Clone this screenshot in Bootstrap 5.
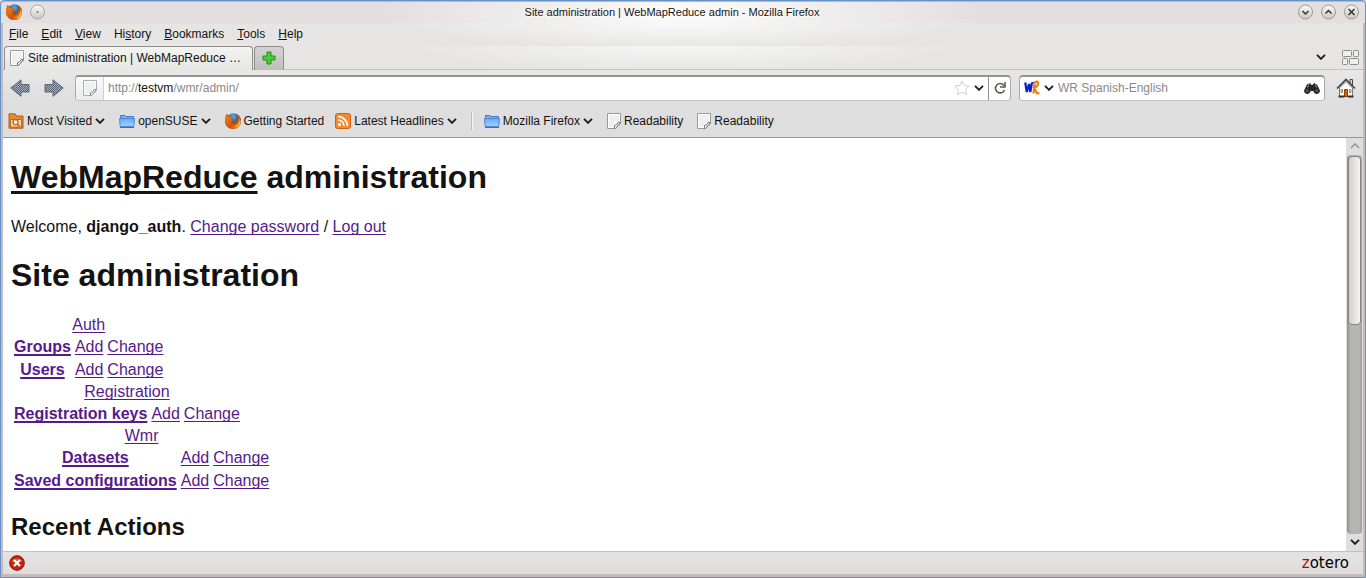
<!DOCTYPE html>
<html lang="en">
<head>
<meta charset="utf-8">
<meta name="viewport" content="width=device-width, initial-scale=1">
<title>Site administration | WebMapReduce admin</title>
<link href="https://cdn.jsdelivr.net/npm/bootstrap@5.3.0/dist/css/bootstrap.min.css" rel="stylesheet">
<style>
body { font: 12px/16px "Liberation Sans", Arial, sans-serif; color: #141312; background: #dedede; }
button { font: inherit; color: inherit; background: none; border: 0; padding: 0; line-height: 16px; }
svg { display: block; flex: none; }
.window-frame { border: 1px solid #6890c8; background: #c4bcba; padding: 0 2px 3px 2px; box-shadow: inset 0 1px #a9bedd; border-radius: 4px 4px 0 0; }
.title-row { height: 21px; font-size: 11px; margin: 1px -2px 0; padding: 0 6px 0 5px; border-radius: 3px 3px 0 0; background: radial-gradient(ellipse 300px 80px at 50% 50%, #fcfbfb, #e3dfde); }
.title-text { text-shadow: 0 1px #fff; }
.chrome-area { background: #e4e3e2; }
.menu-row { height: 23px; padding: 0 6px; background: radial-gradient(ellipse 280px 26px at 50% 0, #f9f9f9, #e6e5e4); }
.menu-row button { margin-right: 13px; }
.tab-row { height: 24px; border-bottom: 1px solid #c3c2c1; padding-left: 1px; background: radial-gradient(ellipse 280px 26px at 50% 0, #f6f6f6, #e6e5e4); }
.tab-page { width: 249px; height: 24px; padding: 0 6px 0 5px; border: 1px solid #8f8e8d; border-bottom: 0; border-radius: 4px 4px 0 0; background: linear-gradient(#f3f3f2, #e6e6e5); }
.tab-new { width: 30px; height: 24px; margin-left: 1px; border: 1px solid #8f8e8d; border-bottom: 0; border-radius: 4px 4px 0 0; background: linear-gradient(#d5d4d3, #bfbebd); }
.tool-area { background: linear-gradient(#e8e7e7, #dedede 50%); border-bottom: 1px solid #9b9a99; }
.nav-row { height: 36px; padding: 0 7px; }
.nav-forward { margin: 0 11px 0 14px; }
.nav-home { margin-left: 11px; }
.field-box { height: 26px; background: #fff; border: 1px solid #aaa; border-top: 2px solid #959493; border-bottom-color: #c4c4c4; border-radius: 4px; overflow: hidden; }
.field-box input { border: 0; outline: 0; padding: 0; background: none; color: #8a8988; min-width: 0; }
.field-box input::placeholder { color: #8a8988; opacity: 1; }
.url-text { cursor: text; color: #8a8988; }
.url-text b { font-weight: 400; color: #141312; }
.site-id { width: 28px; background: linear-gradient(#fafafa, #ececec); border-right: 1px solid #d0cfce; }
.reload-cell { width: 22px; border-left: 1px solid #8e8d8c; }
.search-col { width: 306px; }
.mark-row { height: 31px; padding: 0 5px; }
.mark-row button { gap: 3px; white-space: nowrap; }
.mark-row > * { margin-left: 14px; }
.mark-row > :first-child { margin-left: 0; }
.mark-row > .mark-near { margin-left: 11px; }
.mark-sep { width: 2px; height: 18px; background: linear-gradient(90deg, #bdbdbd 50%, #f6f6f6 50%); }
.page-view { background: #fff; min-height: 0; font-size: 16px; line-height: 19px; }
.doc { overflow: hidden; padding: 0 8px; min-width: 0; }
.doc h1 { font-size: 32px; line-height: 37px; font-weight: 700; margin: 21px 0; }
.doc h2 { font-size: 24px; line-height: 28px; font-weight: 700; margin: 20px 0; }
.doc p { margin: 0; }
.doc a { color: #551a8b; text-underline-offset: 2px; text-decoration-thickness: 1px; text-decoration-skip-ink: none; }
.doc h1 a { color: inherit; text-decoration-thickness: 3px; text-underline-offset: 3px; }
.doc th a { text-decoration-thickness: 2px; }
.admin-list { border-collapse: separate; border-spacing: 2px; }
.admin-list caption { caption-side: top; padding: 0; text-align: center; color: inherit; }
.admin-list td, .admin-list th { padding: 1px; text-align: center; }
.scroll-col { width: 17px; background: #dedede; }
.scroll-end { height: 17px; }
.scroll-track { background: linear-gradient(90deg, #8f8e8d, #b5b4b2 25%, #b5b4b2 80%, #a09f9e); border-radius: 4px; margin: 0 1px; padding: 1px; }
.scroll-thumb { height: 45%; border: 1px solid #868584; border-radius: 4px; background: linear-gradient(90deg, #d2d1cf, #e9e8e6 70%, #f5f5f5); }
.status-row { height: 24px; padding: 0 14px 0 6px; border-top: 1px solid #c3c2c1; background: linear-gradient(#e4e3e2, #dfdedd); }
.zotero-btn { font-family: "DejaVu Sans", sans-serif; font-size: 15px; color: #000; }
.zotero-btn span { color: #a00d0d; }
</style>
</head>
<body>
<svg width="0" height="0" class="position-absolute" aria-hidden="true">
  <defs>
    <linearGradient id="gKnob" x1="0" y1="0" x2="0" y2="1"><stop offset="0" stop-color="#fafafa"/><stop offset="1" stop-color="#c9c5c4"/></linearGradient>
    <linearGradient id="gFold" x1="0" y1="0" x2="0" y2="1"><stop offset="0" stop-color="#6ba8f0"/><stop offset="1" stop-color="#a8d0fb"/></linearGradient>
    <radialGradient id="gGlobe" cx=".45" cy=".25" r=".7"><stop offset="0" stop-color="#59b3e8"/><stop offset="1" stop-color="#0a2a70"/></radialGradient>
    <linearGradient id="gFox" x1="0" y1="0" x2="1" y2="1"><stop offset="0" stop-color="#f58a1c"/><stop offset=".6" stop-color="#d84f08"/><stop offset="1" stop-color="#f7b52a"/></linearGradient>
    <pattern id="pDots" width="2" height="2" patternUnits="userSpaceOnUse"><rect width="2" height="2" fill="#a9b3c2"/><rect width="1" height="1" fill="#56616f"/><rect x="1" y="1" width="1" height="1" fill="#56616f"/></pattern>
    <symbol id="iFox" viewBox="0 0 16 16"><circle cx="8.400" cy="7.400" r="7.200" fill="url(#gGlobe)"/><path d="M.8 3.800 1.800 1 3.500 3.600C5 3 6.800 3.300 7.800 4.600 7 5 6.600 5.700 7.200 6.400L9 6.800C8.800 8 7 8 6.800 8.800 7.200 10.300 9 10.600 10.600 9.700 12.400 8.700 12.700 6.800 11.900 4.900 12.700 5.200 13 5.800 13.200 6.200 13.300 4.200 12.400 2.800 11.400 1.800 14 2.700 15.900 5.200 15.800 8.300 15.600 12.600 12.300 15.900 8.100 15.900 3.800 15.900.4 12.700.2 8.500.1 6.400.4 5 .8 3.800Z" fill="url(#gFox)" stroke="#a63c05" stroke-width=".5"/><path d="M14.200 5C15.300 8.500 13.500 13 9.500 14 13 14.800 15.900 11.500 15.500 7.400Z" fill="#fbc83a"/></symbol>
    <symbol id="iPage" viewBox="0 0 14 16"><path d="M.5.5h13v10l-5 5h-8z" fill="#fdfdfd" stroke="#9a9a9a"/><path d="M2 2h10v7H8v5H2z" fill="#eeefef"/><path d="M13.500 9.500h-2.500l-1 2-2.500 1v3h1z" fill="#fff" stroke="#777"/></symbol>
    <symbol id="iDown" viewBox="0 0 10 6"><path d="m1 .8 4 4 4-4" fill="none" stroke="#1d1c1b" stroke-width="1.900"/></symbol>
    <symbol id="iFolder" viewBox="0 0 16 14"><path d="M1.500 6V1.500H6l1 1h7.500V6z" fill="#78aef0" stroke="#4079c4"/><path d="M.5 4.500h15l-.7 8H1.200z" fill="url(#gFold)" stroke="#4a8add"/><path d="M1 13.500h14" stroke="#5e6b78"/></symbol>
    <symbol id="iArrow" viewBox="0 0 20 18"><path d="M.8 9 11 .8V5.500h8v7.500h-8v4.300z" fill="url(#pDots)" stroke="#5c6877"/></symbol>
  </defs>
</svg>

<div class="window-frame vh-100 d-flex flex-column">
  <header class="title-row d-flex align-items-center gap-2">
    <svg width="16" height="16"><use href="#iFox"/></svg>
    <button aria-label="Pin window"><svg width="16" height="16"><circle cx="7.500" cy="8" r="7" fill="url(#gKnob)" stroke="#a9a5a4"/><circle cx="7.500" cy="8" r="1" fill="#777"/></svg></button>
    <div class="title-text flex-grow-1 text-center">Site administration | WebMapReduce admin - Mozilla Firefox</div>
    <div class="d-flex gap-2">
      <button aria-label="Minimize"><svg width="15" height="16"><circle cx="7.500" cy="8" r="7" fill="url(#gKnob)" stroke="#9c9897"/><path d="m4.500 7 3 3 3-3" fill="none" stroke="#333" stroke-width="1.500"/></svg></button>
      <button aria-label="Maximize"><svg width="15" height="16"><circle cx="7.500" cy="8" r="7" fill="url(#gKnob)" stroke="#9c9897"/><path d="m4.500 9.500 3-3 3 3" fill="none" stroke="#333" stroke-width="1.500"/></svg></button>
      <button aria-label="Close"><svg width="15" height="16"><circle cx="7.500" cy="8" r="7" fill="url(#gKnob)" stroke="#9c9897"/><path d="m4.500 5 6 6m0-6-6 6" stroke="#333" stroke-width="1.500"/></svg></button>
    </div>
  </header>

  <div class="chrome-area">
    <nav class="menu-row d-flex align-items-center" aria-label="Menu">
      <button><u>F</u>ile</button><button><u>E</u>dit</button><button><u>V</u>iew</button><button>Hi<u>s</u>tory</button><button><u>B</u>ookmarks</button><button><u>T</u>ools</button><button><u>H</u>elp</button>
    </nav>
    <div class="tab-row d-flex">
      <button class="tab-page d-flex align-items-center gap-1"><svg width="14" height="16"><use href="#iPage"/></svg><span class="text-nowrap">Site administration | WebMapReduce …</span></button>
      <button class="tab-new d-flex align-items-center justify-content-center" aria-label="New tab"><svg width="14" height="14"><path d="M5 1h4v4h4v4H9v4H5V9H1V5h4z" fill="#4ccb34" stroke="#1e8f14" stroke-linejoin="round"/></svg></button>
      <div class="ms-auto d-flex align-items-center gap-3 pe-1">
        <button aria-label="List all tabs"><svg width="10" height="6"><use href="#iDown"/></svg></button>
        <button aria-label="Tab groups"><svg width="17" height="17" fill="#efefef" stroke="#8b8d88"><rect x=".5" y="1.500" width="9" height="6" rx="1"/><rect x="11.500" y="1.500" width="5" height="6" rx="1"/><rect x=".5" y="9.500" width="5" height="6" rx="1"/><rect x="7.500" y="9.500" width="9" height="6" rx="1"/></svg></button>
      </div>
    </div>
  </div>

  <div class="tool-area">
    <div class="nav-row d-flex align-items-center">
      <button aria-label="Back"><svg width="20" height="18"><use href="#iArrow"/></svg></button>
      <button class="nav-forward" aria-label="Forward"><svg width="20" height="18"><g transform="translate(20 0) scale(-1 1)"><use href="#iArrow"/></g></svg></button>
      <div class="field-box flex-grow-1 d-flex align-items-stretch">
        <button class="site-id d-flex align-items-center justify-content-center" aria-label="Site identity"><svg width="14" height="16" opacity=".8"><use href="#iPage"/></svg></button>
        <div class="url-text flex-grow-1 align-self-center ps-1" role="textbox" contenteditable="true" aria-label="Address" spellcheck="false">http://<b>testvm</b>/wmr/admin/</div>
        <button aria-label="Bookmark this page"><svg width="16" height="16"><path d="m8 1 2.200 4.500 5 .6-3.600 3.500.9 5L8 12.300l-4.500 2.300.9-5L.8 6.100l5-.6z" fill="#fff" stroke="#cfcfcf"/></svg></button>
        <button class="px-1" aria-label="Show history"><svg width="10" height="6"><use href="#iDown"/></svg></button>
        <button class="reload-cell d-flex align-items-center justify-content-center" aria-label="Reload"><svg width="14" height="14"><path d="M11 4.500A4.700 4.700 0 1 0 11.500 9" fill="none" stroke="#5b5754" stroke-width="1.600"/><path d="M12 1v5H7" fill="none" stroke="#5b5754" stroke-width="1.600"/></svg></button>
      </div>
      <div class="search-col field-box d-flex align-items-center ms-2 px-1">
        <button class="d-flex align-items-center gap-1" aria-label="Search engine"><svg width="16" height="16" fill="none"><path d="m1.200 2.500 1.600 9.500L5 4l1.300 8L8 2.500" stroke="#0b1ecb" stroke-width="2.200"/><path d="M8 2.500h2" stroke="#0b1ecb"/><path d="M9.500 13.500 10.500 3c1.500-2.500 4-1.500 3.500 1.200-.4 2-2 3-4 3.300l3.200 6 2.300-.5" stroke="#f07d14" stroke-width="2.200"/></svg><svg width="10" height="6"><use href="#iDown"/></svg></button>
        <input class="flex-grow-1 ms-1" type="text" placeholder="WR Spanish-English" aria-label="Search">
        <button aria-label="Search"><svg width="16" height="13"><path d="M3 2.500 6 1l1.500 2h1L10 1l3 1.500 3 6C16 13 10 13 9.500 9h-3C6 13 0 13 0 8.500z" fill="#22252a"/><circle cx="3" cy="8.800" r="1.800" fill="#7b3f28"/><circle cx="13" cy="8.800" r="1.800" fill="#7b3f28"/><path d="m4 3 1.500-1M11 2l1.500 1M3 5l2-1m6 0 2 1" stroke="#9ba2ab"/></svg></button>
      </div>
      <button class="nav-home" aria-label="Home"><svg width="20" height="20"><path d="M14 1.500h2.500V8L14 5.500z" fill="#ddd" stroke="#444"/><path d="M3.500 10v8.500h13V10L10 3.500z" fill="#fff" stroke="#777"/><path d="M1 10.500 10 1.500l9 9" fill="none" stroke="#42484e" stroke-width="1.700"/><path d="M8.500 11.500h3v7h-3z" fill="#d65f13" stroke="#8a4210"/><path d="M5 11.500h1.500v3H5zM13.500 11.500H15v3h-1.500z" fill="#ffd9a0" stroke="#b88a4c"/><path d="M2.500 18.500h6m3.500 0h5.500" stroke="#2e3136" stroke-width="2"/></svg></button>
    </div>
    <nav class="mark-row d-flex align-items-center" aria-label="Bookmarks">
      <button class="d-flex align-items-center"><svg width="16" height="16"><path d="M1 3V.8h6L8.500 3H15v12.200H1z" fill="#e18a35" stroke="#b05f14"/><path d="M2.500 6.500h11v7.500h-11z" fill="#f6d9b4" stroke="#c06a1a"/><circle cx="7.500" cy="9.200" r="2.500" fill="#fff5e8" stroke="#c06a1a" stroke-width="1.300"/><path d="m9.300 11 2.400 2.500" stroke="#c06a1a" stroke-width="1.600"/></svg>Most Visited<svg width="10" height="6"><use href="#iDown"/></svg></button>
      <button class="d-flex align-items-center"><svg width="16" height="14"><use href="#iFolder"/></svg>openSUSE<svg width="10" height="6"><use href="#iDown"/></svg></button>
      <button class="d-flex align-items-center"><svg width="16" height="16"><use href="#iFox"/></svg>Getting Started</button>
      <button class="d-flex align-items-center mark-near"><svg width="16" height="16"><rect x=".5" y=".5" width="15" height="15" rx="2" fill="#f08a2c" stroke="#d0620e"/><circle cx="4.500" cy="11.500" r="1.500" fill="#fff"/><path d="M3 7a6 6 0 0 1 6 6M3 3.500A9.500 9.500 0 0 1 12.500 13" fill="none" stroke="#fff" stroke-width="1.700"/></svg>Latest Headlines<svg width="10" height="6"><use href="#iDown"/></svg></button>
      <div class="mark-sep"></div>
      <button class="d-flex align-items-center mark-near"><svg width="16" height="14"><use href="#iFolder"/></svg>Mozilla Firefox<svg width="10" height="6"><use href="#iDown"/></svg></button>
      <button class="d-flex align-items-center"><svg width="14" height="16"><use href="#iPage"/></svg>Readability</button>
      <button class="d-flex align-items-center"><svg width="14" height="16"><use href="#iPage"/></svg>Readability</button>
    </nav>
  </div>

  <div class="page-view flex-grow-1 d-flex">
    <main class="doc flex-grow-1">
      <h1><a href="#">WebMapReduce</a> administration</h1>
      <p>Welcome, <strong>django_auth</strong>. <a href="#">Change password</a> / <a href="#">Log out</a></p>
      <h1>Site administration</h1>
      <table class="admin-list">
        <caption><a href="#">Auth</a></caption>
        <tr><th scope="row"><a href="#">Groups</a></th><td><a href="#">Add</a></td><td><a href="#">Change</a></td></tr>
        <tr><th scope="row"><a href="#">Users</a></th><td><a href="#">Add</a></td><td><a href="#">Change</a></td></tr>
      </table>
      <table class="admin-list">
        <caption><a href="#">Registration</a></caption>
        <tr><th scope="row"><a href="#">Registration keys</a></th><td><a href="#">Add</a></td><td><a href="#">Change</a></td></tr>
      </table>
      <table class="admin-list">
        <caption><a href="#">Wmr</a></caption>
        <tr><th scope="row"><a href="#">Datasets</a></th><td><a href="#">Add</a></td><td><a href="#">Change</a></td></tr>
        <tr><th scope="row"><a href="#">Saved configurations</a></th><td><a href="#">Add</a></td><td><a href="#">Change</a></td></tr>
      </table>
      <h2>Recent Actions</h2>
    </main>
    <div class="scroll-col d-flex flex-column" aria-hidden="true">
      <div class="scroll-end d-flex align-items-center justify-content-center"><svg width="10" height="6"><path d="m1 5 4-4 4 4" fill="none" stroke="#9a9998" stroke-width="1.700"/></svg></div>
      <div class="scroll-track flex-grow-1"><div class="scroll-thumb"></div></div>
      <div class="scroll-end d-flex align-items-center justify-content-center"><svg width="10" height="6"><use href="#iDown"/></svg></div>
    </div>
  </div>

  <footer class="status-row d-flex align-items-center justify-content-between">
    <button aria-label="Errors"><svg width="16" height="16"><circle cx="8" cy="8" r="7.300" fill="#c8230f" stroke="#8c1208"/><path d="M2.500 6.500a6 5 0 0 1 11 0z" fill="#e8806c" opacity=".6"/><path d="m5 5 6 6m0-6-6 6" stroke="#fff" stroke-width="2.400"/></svg></button>
    <button class="zotero-btn"><span>z</span>otero</button>
  </footer>
</div>
<script src="https://cdn.jsdelivr.net/npm/bootstrap@5.3.0/dist/js/bootstrap.bundle.min.js"></script>
</body>
</html>
